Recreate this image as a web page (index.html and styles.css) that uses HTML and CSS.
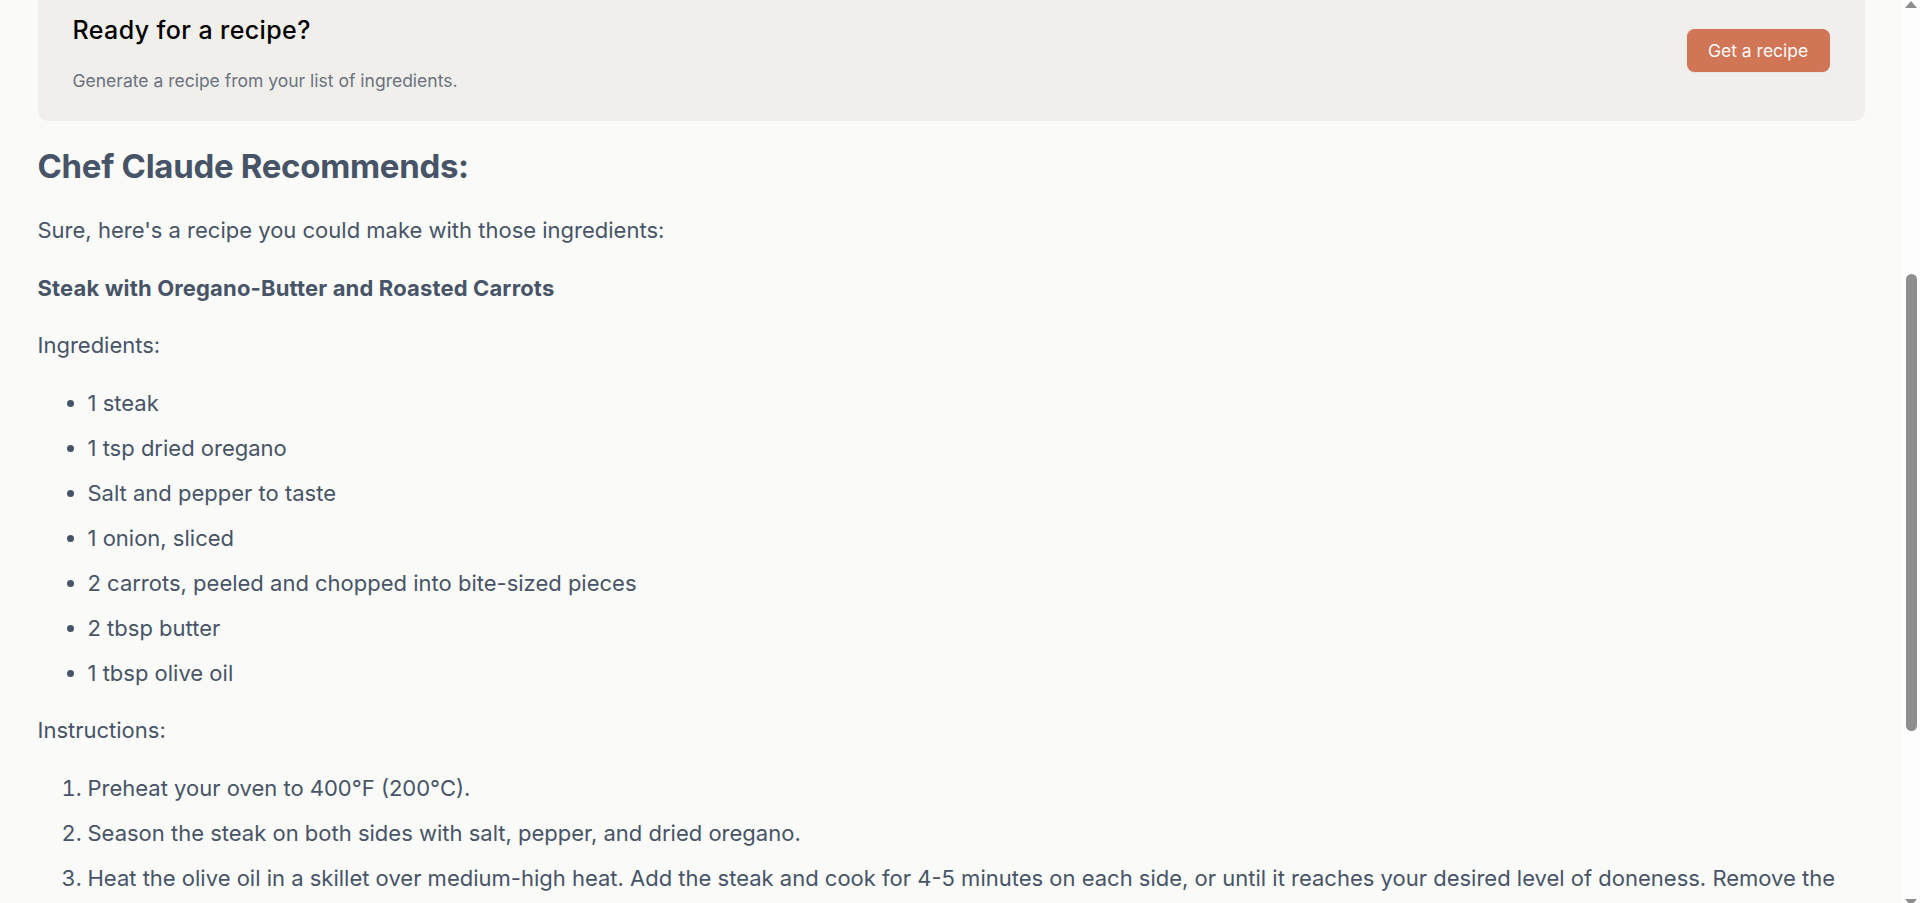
FILE: index.html
```html
<!DOCTYPE html>
<html lang="en">
<head>
<meta charset="utf-8">
<title>Chef Claude</title>
<link rel="stylesheet" href="styles.css">
</head>
<body>
<main class="page">
  <section class="get-recipe">
    <div class="get-recipe-text">
      <h3>Ready for a recipe?</h3>
      <p>Generate a recipe from your list of ingredients.</p>
    </div>
    <button class="get-recipe-btn" type="button">Get a recipe</button>
  </section>

  <section class="recipe">
    <h2>Chef Claude Recommends:</h2>
    <p>Sure, here's a recipe you could make with those ingredients:</p>
    <p><strong>Steak with Oregano-Butter and Roasted Carrots</strong></p>
    <p>Ingredients:</p>
    <ul>
      <li>1 steak</li>
      <li>1 tsp dried oregano</li>
      <li>Salt and pepper to taste</li>
      <li>1 onion, sliced</li>
      <li>2 carrots, peeled and chopped into bite-sized pieces</li>
      <li>2 tbsp butter</li>
      <li>1 tbsp olive oil</li>
    </ul>
    <p>Instructions:</p>
    <ol>
      <li>Preheat your oven to 400°F (200°C).</li>
      <li>Season the steak on both sides with salt, pepper, and dried oregano.</li>
      <li>Heat the olive oil in a skillet over medium-high heat. Add the steak and cook for 4-5 minutes on each side, or until it reaches your desired level of doneness. Remove the steak from the skillet and let it rest.</li>
      <li>In the same skillet, add the sliced onion and cook for 3-4 minutes until softened.</li>
      <li>Toss the chopped carrots with a little olive oil, salt, and pepper. Spread them on a baking sheet and roast for 20-25 minutes, or until tender.</li>
      <li>Mix the butter with a pinch of dried oregano.</li>
      <li>Slice the steak and serve it topped with the oregano-butter, alongside the roasted carrots and onions.</li>
    </ol>
    <p>Enjoy your meal!</p>
  </section>
</main>
<aside class="scrollbar" aria-hidden="true">
  <span class="sb-up"></span>
  <span class="sb-thumb"></span>
  <span class="sb-down"></span>
</aside>
</body>
</html>
```
FILE: styles.css
```css
body {
  margin: 0;
  display: flex;
  align-items: flex-start;
  background-color: #fafaf8;
  font-family: Inter, "Noto Sans", sans-serif;
}

.page {
  flex: 1;
  min-width: 0;
  margin-top: -20px;
  padding: 0 37.5px 12.5px;
}

/* drawn page scrollbar */
.scrollbar {
  width: 18px;
  height: 100vh;
  flex-shrink: 0;
  box-sizing: border-box;
  padding-top: 1px;
  display: flex;
  flex-direction: column;
  align-items: center;
  overflow: hidden;
  background: #fdfdfd;
}

.sb-up {
  width: 0;
  height: 0;
  border-left: 6.5px solid transparent;
  border-right: 6.5px solid transparent;
  border-bottom: 7px solid #8e8e8e;
}

.sb-thumb {
  width: 11px;
  height: 457px;
  margin-top: 266px;
  border-radius: 6px;
  background: #8e8e8e;
}

.sb-down {
  width: 0;
  height: 0;
  margin-top: auto;
  margin-bottom: -3px;
  border-left: 6.5px solid transparent;
  border-right: 6.5px solid transparent;
  border-top: 7px solid #8e8e8e;
}

/* get recipe card */
.get-recipe {
  display: flex;
  justify-content: space-between;
  align-items: center;
  background: #f0efeb;
  border-radius: 10px;
  padding: 12.5px 35px;
}

.get-recipe-text h3 {
  margin: 22.5px 0;
  font-size: 25px;
  font-weight: 500;
  line-height: 30px;
  letter-spacing: 0.4px;
  color: #000;
}

.get-recipe-text p {
  margin: 17.5px 0 16px;
  font-size: 17.5px;
  line-height: 25px;
  color: #6b7280;
}

.get-recipe-btn {
  border: none;
  border-radius: 7.5px;
  background: #d17557;
  box-shadow: 0 1px 2px rgba(0, 0, 0, 0.05);
  color: #fafaf8;
  padding: 11.25px 21.25px;
  font-family: Inter, "Noto Sans", sans-serif;
  font-size: 17.5px;
  line-height: 21.25px;
  cursor: pointer;
}

/* recipe */
.recipe {
  color: #475467;
  font-size: 22px;
  line-height: 37.5px;
  font-weight: 400;
}

.recipe h2 {
  margin: 27.4px 0 26.5px;
  font-size: 33px;
  line-height: 37.5px;
  font-weight: 700;
  letter-spacing: -0.3px;
}

.recipe p {
  margin: 20px 0;
}

.recipe strong {
  font-weight: 700;
  letter-spacing: 0.15px;
}

.recipe ul,
.recipe ol {
  margin: 20px 0;
  padding-left: 50px;
}

.recipe li {
  margin-bottom: 7.5px;
}
```
